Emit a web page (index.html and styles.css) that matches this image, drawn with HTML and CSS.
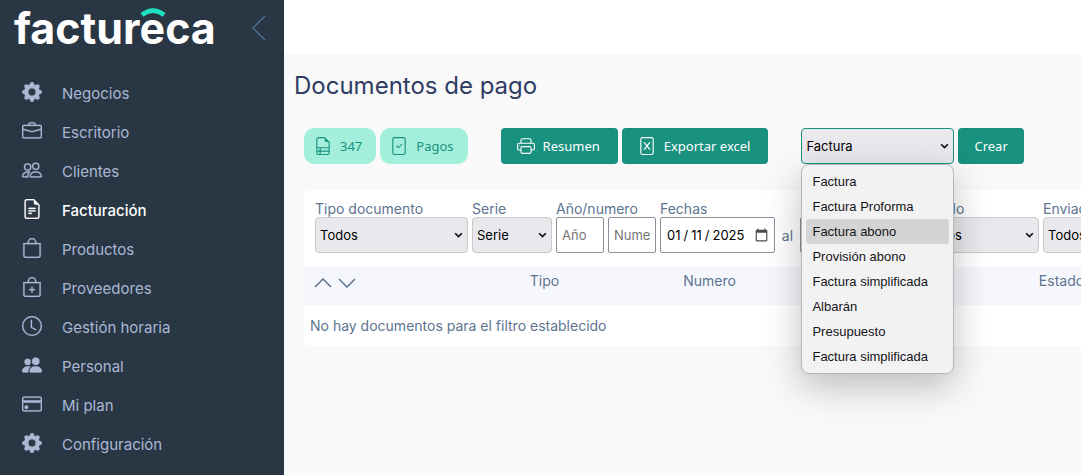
FILE: index.html
```html
<!DOCTYPE html>
<html lang="es">
<head>
  <meta charset="UTF-8" />
  <meta name="viewport" content="width=device-width, initial-scale=1.0"/>
  <title>Documentos de pago</title>
  <link rel="stylesheet" href="styles.css">
</head>
<body>

  <!-- Shared icons -->
  <svg class="sprite" aria-hidden="true">
    <symbol id="gear" viewBox="0 0 16 16"><path d="M9.405 1.05c-.413-1.4-2.397-1.4-2.81 0l-.1.34a1.464 1.464 0 0 1-2.105.872l-.31-.17c-1.283-.698-2.686.705-1.987 1.987l.169.311c.446.82.023 1.841-.872 2.105l-.34.1c-1.4.413-1.4 2.397 0 2.81l.34.1a1.464 1.464 0 0 1 .872 2.105l-.17.31c-.698 1.283.705 2.686 1.987 1.987l.311-.169a1.464 1.464 0 0 1 2.105.872l.1.34c.413 1.4 2.397 1.4 2.81 0l.1-.34a1.464 1.464 0 0 1 2.105-.872l.31.17c1.283.698 2.686-.705 1.987-1.987l-.169-.311a1.464 1.464 0 0 1 .872-2.105l.34-.1c1.4-.413 1.4-2.397 0-2.81l-.34-.1a1.464 1.464 0 0 1-.872-2.105l.17-.31c.698-1.283-.705-2.686-1.987-1.987l-.311.169a1.464 1.464 0 0 1-2.105-.872zM8 10.93a2.929 2.929 0 1 1 0-5.86 2.929 2.929 0 0 1 0 5.858z"/></symbol>
    <symbol id="bag" viewBox="0 0 16 16"><path d="M8 1a2.5 2.5 0 0 1 2.5 2.5V4h-5v-.5A2.5 2.5 0 0 1 8 1m3.500 3v-.5a3.500 3.500 0 1 0-7 0V4H1v10a2 2 0 0 0 2 2h10a2 2 0 0 0 2-2V4zM2 5h12v9a1 1 0 0 1-1 1H3a1 1 0 0 1-1-1z"/></symbol>
  </svg>

  <aside class="sidebar">
    <div class="brand">
      <a class="logo" href="#">factur<span class="logo-e">e<svg viewBox="0 0 28 12"><path d="M2 9Q14 0 26 9" fill="none" stroke="#1fe0bf" stroke-width="5"/></svg></span>ca</a>
      <button class="collapse" aria-label="Contraer menú">
        <svg viewBox="0 0 14 26"><path d="M13 1 1 13l12 12" fill="none" stroke="currentColor" stroke-width="1.500"/></svg>
      </button>
    </div>
    <nav class="menu">
      <a href="#"><svg><use href="#gear"/></svg>Negocios</a>
      <a href="#"><svg viewBox="0 0 16 16"><path d="M6.500 1A1.500 1.500 0 0 0 5 2.500V3H1.500A1.500 1.500 0 0 0 0 4.500v8A1.500 1.500 0 0 0 1.500 14h13a1.500 1.500 0 0 0 1.500-1.500v-8A1.500 1.500 0 0 0 14.500 3H11v-.5A1.500 1.500 0 0 0 9.500 1zm0 1h3a.5.5 0 0 1 .5.5V3H6v-.5a.5.5 0 0 1 .5-.5m1.886 6.914L15 7.151V12.500a.5.5 0 0 1-.5.5h-13a.5.5 0 0 1-.5-.5V7.150l6.614 1.764a1.500 1.500 0 0 0 .772 0M1.500 4h13a.5.5 0 0 1 .5.5v1.616L8.129 7.948a.5.5 0 0 1-.258 0L1 6.116V4.500a.5.5 0 0 1 .5-.5"/></svg>Escritorio</a>
      <a href="#"><svg viewBox="0 0 16 16"><path d="M15 14s1 0 1-1-1-4-5-4-5 3-5 4 1 1 1 1zm-7.978-1L7 12.996c.001-.264.167-1.030.760-1.720C8.312 10.629 9.282 10 11 10c1.717 0 2.687.630 3.240 1.276.593.690.758 1.457.760 1.720l-.008.002-.014.002zM11 7a2 2 0 1 0 0-4 2 2 0 0 0 0 4m3-2a3 3 0 1 1-6 0 3 3 0 0 1 6 0M6.936 9.280a6 6 0 0 0-1.230-.247A7 7 0 0 0 5 9c-4 0-5 3-5 4q0 1 1 1h4.216A2.240 2.240 0 0 1 5 13c0-1.010.377-2.042 1.090-2.904.243-.294.526-.569.846-.816M4.920 10A5.500 5.500 0 0 0 4 13H1c0-.260.164-1.030.760-1.724.545-.636 1.492-1.256 3.160-1.275ZM1.500 5.500a3 3 0 1 1 6 0 3 3 0 0 1-6 0m3-2a2 2 0 1 0 0 4 2 2 0 0 0 0-4"/></svg>Clientes</a>
      <a href="#" class="active"><svg viewBox="0 0 16 16"><path d="M5.500 7a.5.5 0 0 0 0 1h5a.5.5 0 0 0 0-1zM5 9.500a.5.5 0 0 1 .5-.5h5a.5.5 0 0 1 0 1h-5a.5.5 0 0 1-.5-.5m0 2a.5.5 0 0 1 .5-.5h2a.5.5 0 0 1 0 1h-2a.5.5 0 0 1-.5-.5"/><path d="M9.500 0H4a2 2 0 0 0-2 2v12a2 2 0 0 0 2 2h8a2 2 0 0 0 2-2V4.500zm0 1v2A1.500 1.500 0 0 0 11 4.500h2V14a1 1 0 0 1-1 1H4a1 1 0 0 1-1-1V2a1 1 0 0 1 1-1z"/></svg>Facturación</a>
      <a href="#"><svg><use href="#bag"/></svg>Productos</a>
      <a href="#"><svg viewBox="0 0 16 16"><use href="#bag"/><path d="M8 7.500a.5.5 0 0 1 .5.5v1.500H10a.5.5 0 0 1 0 1H8.500V12a.5.5 0 0 1-1 0v-1.500H6a.5.5 0 0 1 0-1h1.500V8a.5.5 0 0 1 .5-.5"/></svg>Proveedores</a>
      <a href="#"><svg viewBox="0 0 16 16"><path d="M8 3.500a.5.5 0 0 0-1 0V9a.5.5 0 0 0 .252.434l3.500 2a.5.5 0 0 0 .496-.868L8 8.710z"/><path d="M8 16A8 8 0 1 0 8 0a8 8 0 0 0 0 16m7-8A7 7 0 1 1 1 8a7 7 0 0 1 14 0"/></svg>Gestión horaria</a>
      <a href="#"><svg viewBox="0 0 16 16"><path d="M7 14s-1 0-1-1 1-4 5-4 5 3 5 4-1 1-1 1zm4-6a3 3 0 1 0 0-6 3 3 0 0 0 0 6m-5.784 6A2.240 2.240 0 0 1 5 13c0-1.355.680-2.750 1.936-3.720A6.300 6.300 0 0 0 5 9c-4 0-5 3-5 4s1 1 1 1zM4.500 8a2.500 2.500 0 1 0 0-5 2.500 2.500 0 0 0 0 5"/></svg>Personal</a>
      <a href="#"><svg viewBox="0 0 16 16"><path d="M14 3a1 1 0 0 1 1 1v8a1 1 0 0 1-1 1H2a1 1 0 0 1-1-1V4a1 1 0 0 1 1-1zM2 2a2 2 0 0 0-2 2v8a2 2 0 0 0 2 2h12a2 2 0 0 0 2-2V4a2 2 0 0 0-2-2z"/><path d="M1 5h14v2H1z"/><circle cx="3.500" cy="10.500" r="1.500"/></svg>Mi plan</a>
      <a href="#"><svg><use href="#gear"/></svg>Configuración</a>
    </nav>
  </aside>

  <div class="page">
    <header class="topbar"></header>
    <main>
      <h1>Documentos de pago</h1>

      <div class="toolbar">
        <div class="group">
          <button class="btn btn-soft"><svg viewBox="0 0 16 16"><path d="M14 14V4.500L9.500 0H4a2 2 0 0 0-2 2v12a2 2 0 0 0 2 2h8a2 2 0 0 0 2-2M9.500 3A1.500 1.500 0 0 0 11 4.500h2V9H3V2a1 1 0 0 1 1-1h5.500zM3 12v-2h2v2zm0 1h2v2H4a1 1 0 0 1-1-1zm3 2v-2h7v1a1 1 0 0 1-1 1zm7-3H6v-2h7z"/></svg>347</button>
          <button class="btn btn-soft"><svg viewBox="0 0 16 16"><path d="M10.854 6.146a.5.5 0 0 1 0 .708l-3 3a.5.5 0 0 1-.708 0l-1.500-1.500a.5.5 0 1 1 .708-.708L7.500 8.793l2.646-2.647a.5.5 0 0 1 .708 0"/><path d="M4 0a2 2 0 0 0-2 2v12a2 2 0 0 0 2 2h8a2 2 0 0 0 2-2V2a2 2 0 0 0-2-2zm0 1h8a1 1 0 0 1 1 1v12a1 1 0 0 1-1 1H4a1 1 0 0 1-1-1V2a1 1 0 0 1 1-1"/></svg>Pagos</button>
        </div>
        <div class="group">
          <button class="btn btn-icon"><svg viewBox="0 0 16 16"><path d="M2.500 8a.5.5 0 1 0 0-1 .5.5 0 0 0 0 1"/><path d="M5 1a2 2 0 0 0-2 2v2H2a2 2 0 0 0-2 2v3a2 2 0 0 0 2 2h1v1a2 2 0 0 0 2 2h6a2 2 0 0 0 2-2v-1h1a2 2 0 0 0 2-2V7a2 2 0 0 0-2-2h-1V3a2 2 0 0 0-2-2zM4 3a1 1 0 0 1 1-1h6a1 1 0 0 1 1 1v2H4zm1 5a2 2 0 0 0-2 2v1H2a1 1 0 0 1-1-1V7a1 1 0 0 1 1-1h12a1 1 0 0 1 1 1v3a1 1 0 0 1-1 1h-1v-1a2 2 0 0 0-2-2zm7 2v3a1 1 0 0 1-1 1H5a1 1 0 0 1-1-1v-3a1 1 0 0 1 1-1h6a1 1 0 0 1 1 1"/></svg>Resumen</button>
          <button class="btn btn-icon"><svg viewBox="0 0 16 16"><path d="M5.180 4.616a.5.5 0 0 1 .704.064L8 7.219l2.116-2.540a.5.5 0 1 1 .768.641L8.651 8l2.233 2.680a.5.5 0 0 1-.768.640L8 8.781l-2.116 2.540a.5.5 0 0 1-.768-.641L7.349 8 5.116 5.320a.5.5 0 0 1 .064-.704"/><path d="M4 0a2 2 0 0 0-2 2v12a2 2 0 0 0 2 2h8a2 2 0 0 0 2-2V2a2 2 0 0 0-2-2zm0 1h8a1 1 0 0 1 1 1v12a1 1 0 0 1-1 1H4a1 1 0 0 1-1-1V2a1 1 0 0 1 1-1"/></svg>Exportar excel</button>
        </div>
        <div class="group">
          <div class="dropdown">
            <span class="select"><select class="w-lg focused" aria-label="Tipo de documento a crear"><option>Factura</option></select><svg viewBox="0 0 8 6"><path d="m1 1 3 3 3-3"/></svg></span>
            <ul class="options">
              <li>Factura</li>
              <li>Factura Proforma</li>
              <li class="selected">Factura abono</li>
              <li>Provisión abono</li>
              <li>Factura simplificada</li>
              <li>Albarán</li>
              <li>Presupuesto</li>
              <li>Factura simplificada</li>
            </ul>
          </div>
          <button class="btn">Crear</button>
        </div>
      </div>

      <section class="card">
        <form class="filters">
          <div class="field">
            <label for="tipo">Tipo documento</label>
            <span class="select"><select id="tipo" class="w-lg"><option>Todos</option></select><svg viewBox="0 0 8 6"><path d="m1 1 3 3 3-3"/></svg></span>
          </div>
          <div class="field">
            <label for="serie">Serie</label>
            <span class="select"><select id="serie" class="w-sm"><option>Serie</option></select><svg viewBox="0 0 8 6"><path d="m1 1 3 3 3-3"/></svg></span>
          </div>
          <div class="field">
            <label for="anio">Año/numero</label>
            <div class="inputs">
              <input id="anio" class="short" type="text" placeholder="Año">
              <input class="short" type="text" placeholder="Numero" aria-label="Numero">
            </div>
          </div>
          <div class="field">
            <label for="desde">Fechas</label>
            <div class="inputs">
              <input id="desde" type="date" value="2025-01-11">
              <span class="al">al</span>
              <input type="date" aria-label="Fecha hasta">
            </div>
          </div>
          <div class="field">
            <label for="estado">Estado</label>
            <span class="select"><select id="estado" class="w-md"><option>Todos</option></select><svg viewBox="0 0 8 6"><path d="m1 1 3 3 3-3"/></svg></span>
          </div>
          <div class="field">
            <label for="enviado">Enviado</label>
            <span class="select"><select id="enviado" class="w-sm"><option>Todos</option></select><svg viewBox="0 0 8 6"><path d="m1 1 3 3 3-3"/></svg></span>
          </div>
        </form>

        <table>
          <thead>
            <tr>
              <th class="sort">
                <button aria-label="Orden ascendente"><svg viewBox="0 0 18 10"><path d="m1 9 8-8 8 8"/></svg></button>
                <button aria-label="Orden descendente"><svg viewBox="0 0 18 10"><path d="m1 1 8 8 8-8"/></svg></button>
              </th>
              <th>Tipo</th>
              <th>Numero</th>
              <th class="wide"></th>
              <th>Estado</th>
            </tr>
          </thead>
          <tbody>
            <tr><td colspan="5">No hay documentos para el filtro establecido</td></tr>
          </tbody>
        </table>
      </section>
    </main>
  </div>

</body>
</html>
```
FILE: styles.css
```css
* {
  box-sizing: border-box;
}

body {
  margin: 0;
  display: flex;
  min-height: 100vh;
  font-family: "Inter", "Liberation Sans", sans-serif;
  font-size: 14px;
  color: #5d7490;
  background: #f9f9f9;
  overflow-x: hidden;
}

button,
input,
select {
  font-family: inherit;
}

.sprite {
  display: none;
}

/* Sidebar */
.sidebar {
  flex: 0 0 284px;
  background: #293643;
}

.brand {
  display: flex;
  align-items: center;
  justify-content: space-between;
  height: 56px;
  padding: 0 18px 0 14px;
}

.logo {
  font-size: 43px;
  font-weight: 700;
  line-height: 52px;
  color: #fff;
  text-decoration: none;
}

.logo-e {
  position: relative;
}

.logo-e svg {
  position: absolute;
  left: 0;
  top: 4px;
  width: 26px;
  height: 12px;
}

.collapse {
  padding: 0;
  border: none;
  background: none;
  color: #4f6d90;
  cursor: pointer;
}

.collapse svg {
  display: block;
  width: 14px;
  height: 26px;
}

.menu {
  padding-top: 18px;
}

.menu a {
  display: flex;
  align-items: center;
  gap: 20px;
  height: 39px;
  padding-left: 22px;
  font-size: 15px;
  color: #aab8d6;
  text-decoration: none;
}

.menu svg {
  width: 20px;
  height: 20px;
  margin-bottom: 4px;
  fill: currentColor;
  stroke: currentColor;
  stroke-width: 0.2;
}

.menu .active {
  color: #fff;
  font-weight: 500;
}

/* Page */
.page {
  flex: 1;
  min-width: 0;
  overflow: hidden;
}

.topbar {
  height: 54px;
  background: #fff;
}

main {
  padding: 16px 0 0 20px;
}

h1 {
  margin: 0 0 26px -10px;
  font-size: 24px;
  font-weight: 400;
  line-height: 32px;
  color: #2f3c63;
}

.toolbar {
  display: flex;
  gap: 33px;
  margin-bottom: 26px;
}

.group {
  display: flex;
  gap: 4px;
}

.btn {
  display: flex;
  align-items: center;
  flex: none;
  gap: 8px;
  height: 36px;
  padding: 0 16px;
  border: none;
  border-radius: 4px;
  font-family: "Noto Sans", sans-serif;
  font-size: 13px;
  font-weight: 400;
  color: #fff;
  background: #18917f;
  cursor: pointer;
}

.btn svg {
  width: 18px;
  height: 18px;
  fill: currentColor;
}

.btn-icon {
  padding-right: 18px;
}

.btn-soft {
  padding: 0 14px 0 10px;
  border-radius: 10px;
  color: #18917f;
  background: #a4efdc;
}

/* Selects and inputs */
.select {
  position: relative;
  display: flex;
}

.select svg {
  position: absolute;
  right: 5px;
  top: 15px;
  width: 9px;
  height: 7px;
  fill: none;
  stroke: #111;
  stroke-width: 1.5;
  pointer-events: none;
}

select {
  appearance: none;
  height: 36px;
  padding: 0 4px;
  border: 1px solid #c9c9c9;
  border-radius: 4px;
  font-size: 13px;
  color: #000;
  background: #e9e9ed;
}

.w-lg {
  width: 153px;
}

.w-md {
  width: 120px;
}

.w-sm {
  width: 80px;
}

.focused {
  border-color: #18917f;
}

.dropdown {
  position: relative;
}

.options {
  position: absolute;
  top: 36px;
  left: 0;
  width: 153px;
  margin: 0;
  padding: 4px;
  border: 1px solid #b5b5b5;
  border-radius: 8px;
  list-style: none;
  font-family: "Liberation Sans", sans-serif;
  font-size: 13px;
  line-height: 25px;
  color: #15141a;
  background: #f2f2f2;
  box-shadow: 0 12px 36px rgba(0, 0, 0, 0.25);
  z-index: 2;
}

.options li {
  padding: 0 6px;
  border-radius: 3px;
}

.options .selected {
  background: #d4d4d4;
}

input {
  height: 36px;
  padding: 0 5px;
  border: 1px solid #8f8f9d;
  border-radius: 2px;
  font-size: 13px;
  color: #000;
  background: #fff;
}

input::placeholder {
  color: #757575;
}

.short {
  width: 48px;
}

input[type="date"] {
  width: 115px;
}

input::-webkit-datetime-edit-text {
  padding: 0 2px;
}

input::-webkit-calendar-picker-indicator {
  width: 15px;
  height: 15px;
  margin: 0;
  padding: 0;
  opacity: 0.7;
}

/* Filters */
.card {
  min-width: 840px;
  border-radius: 6px;
  background: #fff;
}

.filters {
  display: flex;
  gap: 4px;
  padding: 11px 11px 14px;
}

.field {
  flex: none;
}

.field label {
  display: block;
  line-height: 16px;
}

.inputs {
  display: flex;
  align-items: center;
  gap: 4px;
}

.al {
  width: 17px;
  text-align: center;
}

/* Results */
table {
  width: 100%;
  border-collapse: collapse;
  table-layout: fixed;
}

thead {
  background: #f6f7fc;
}

th {
  width: 165px;
  height: 38px;
  padding: 0 0 12px;
  font-weight: 400;
}

.wide {
  width: 187px;
}

th.sort {
  width: 158px;
  padding: 0 10px 8px;
  text-align: left;
}

.sort button {
  padding: 0;
  border: none;
  background: none;
  margin-right: 2px;
  cursor: pointer;
}

.sort svg {
  width: 18px;
  height: 10px;
  fill: none;
  stroke: #5d7490;
  stroke-width: 1.5;
}

td {
  height: 41px;
  padding: 0 6px;
}
```
